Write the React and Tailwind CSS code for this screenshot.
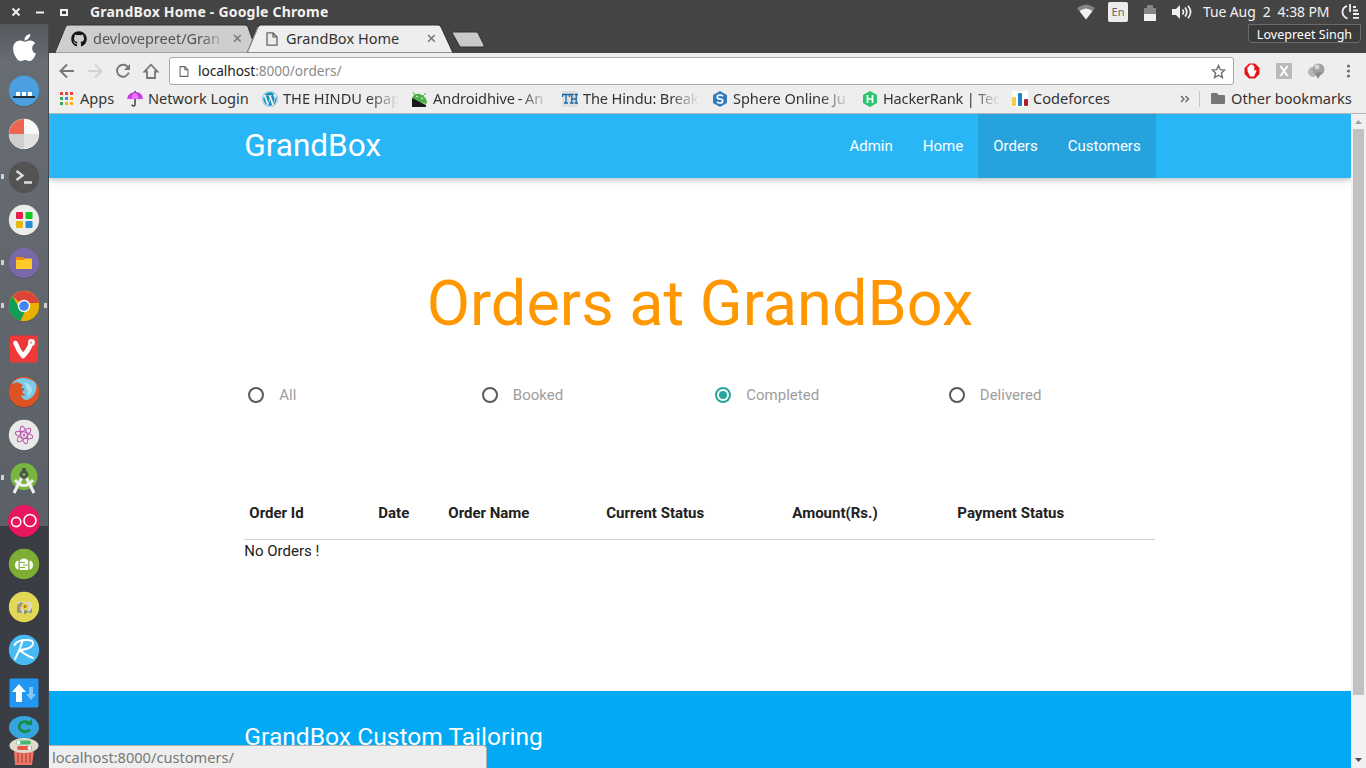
import React from "react";
import { FaApple, FaGithub, FaWordpress } from "react-icons/fa";

const BAR = "font-['Noto_Sans','Open_Sans',sans-serif]";

function PageIcon({ className }) {
  return (
    <svg className={className} viewBox="0 0 12 14" fill="none" stroke="#666" strokeWidth="1.3">
      <path d="M1 .8h6l4 4v8.4H1zM7 .8v4h4" />
    </svg>
  );
}

function CloseIcon({ className }) {
  return (
    <svg className={className} viewBox="0 0 10 10" fill="none" stroke="#777" strokeWidth="1.7">
      <path d="M1.2 1.2l7.4 7.4M8.6 1.2L1.2 8.6" />
    </svg>
  );
}

function TitleBar() {
  return (
    <header className={`flex h-[24px] shrink-0 items-center bg-[#444444] text-[14px] text-[#f2f1ef] ${BAR}`}>
      <svg className="h-[24px] w-[80px] shrink-0" viewBox="0 0 80 24" fill="none" stroke="#f2f1ef" strokeWidth="2">
        <path d="M12.500 8.500l7 7M19.500 8.500l-7 7M36 12.500h8" />
        <path d="M61 10h6v5h-6z" />
      </svg>
      <span className="mb-[2px] ml-[10px] whitespace-nowrap text-[14px] font-bold tracking-[0.2px]">GrandBox Home - Google Chrome</span>
      <div className="ml-auto flex h-full items-center">
        <svg className="h-[16px] w-[20px]" viewBox="0 0 20 16">
          <path d="M1 4Q10-3 19 4L10 15.500z" fill="#858585" />
          <path d="M3.500 7Q10 2 16.500 7L10 15.500z" fill="#f0f0f0" />
        </svg>
        <span className="ml-[12px] flex h-[20px] w-[20px] items-center justify-center rounded-[2px] bg-[#ededed] text-[11px] text-[#666]">En</span>
        <svg className="ml-[15px] h-[17px] w-[14px]" viewBox="0 0 14 17">
          <path d="M4 1h6v3h3v6H1V4h3z" fill="#858585" />
          <path d="M1 10h12v7H1z" fill="#f0f0f0" />
        </svg>
        <svg className="ml-[14px] h-[16px] w-[22px]" viewBox="0 0 22 16" fill="none" stroke="#f0f0f0" strokeWidth="1.700">
          <path d="M1 5h4l4-4v14l-4-4H1z" fill="#f0f0f0" stroke="none" />
          <path d="M11.500 5.500q2 2.500 0 5M14 3.500q3.600 4.500 0 9M17 1.700q5.200 6.300 0 12.600" />
        </svg>
        <span className="mb-[2px] ml-[10px] w-[127px] whitespace-pre text-[14px] tracking-[-0.12px]">Tue Aug  2  4:38 PM</span>
        <svg className="ml-[11px] mr-[6px] h-[16px] w-[19px]" viewBox="0 0 19 16" fill="none" stroke="#f0f0f0" strokeWidth="1.800">
          <path d="M6 1.800Q1.500 3.500 1.500 8T6.500 14.600M9 0v8" />
          <path d="M12 3h3M12 6.500h5M12 10h6M12 13.800h6" />
        </svg>
      </div>
    </header>
  );
}

function Launcher() {
  const icons = [
    <FaApple key="a" className="h-[31px] w-[31px] text-white" />,
    <Disc key="b" fill="#4ca0df">
      <path d="M5 21h22v2H5z" fill="#252d35" />
      <path d="M8 17h4v4H8zM14 17h4v4h-4zM20 17h4v4h-4z" fill="#fff" />
    </Disc>,
    <Disc key="c" fill="#f8f8f8">
      <path d="M16 16V1A15 15 0 0 0 1 16z" fill="#ef6650" />
      <path d="M16 16v15A15 15 0 0 1 1 16z" fill="#cfcfcf" />
      <path d="M16 16v15A15 15 0 0 0 31 16z" fill="#e2e2e2" />
    </Disc>,
    <Disc key="d" fill="#535353">
      <path d="M8.500 10l6 4.500-6 4.500M16 21.500h8" fill="none" stroke="#dcdcdc" strokeWidth="2.400" />
    </Disc>,
    <Disc key="e" fill="#ececec">
      <rect x="8" y="8" width="7" height="7" rx="1" fill="#e91e4d" />
      <rect x="17.500" y="8" width="7" height="7" rx="1" fill="#0bc91c" />
      <rect x="8" y="17" width="7" height="7" rx="1" fill="#e7b70a" />
      <rect x="17.500" y="17" width="7" height="7" rx="1" fill="#288bd5" />
    </Disc>,
    <Disc key="f" fill="#7868a8">
      <path d="M8 10h7l1 2h8v10H8z" fill="#f58a12" />
      <path d="M8 13h7l2-1.500h7V22H8z" fill="#ffca28" />
    </Disc>,
    <Disc key="g" fill="#e8b000">
      <path d="M16 16L4.500 6.200A15.200 15.200 0 0 1 30.800 13H16z" fill="#db4437" />
      <path d="M4.500 6.200L10.500 17l7 3-5 10.800A15.200 15.200 0 0 1 4.500 6.200z" fill="#0f9d58" />
      <circle cx="16" cy="16" r="6.200" fill="#fff" />
      <circle cx="16" cy="16" r="4.800" fill="#4285f4" />
    </Disc>,
    <svg key="h" className="h-[32px] w-[32px]" viewBox="0 0 32 32">
      <rect x="2" y="2.500" width="28" height="27" rx="2" fill="#ef3939" />
      <path d="M7.500 10Q10 17 15 23q6-6 8.500-14" fill="none" stroke="#fff" strokeWidth="4.600" strokeLinecap="round" strokeLinejoin="round" />
      <circle cx="23.500" cy="9.500" r="3.400" fill="#fff" />
      <circle cx="23" cy="9.500" r="1.300" fill="#f3a0a0" />
    </svg>,
    <Disc key="i" fill="#dd5324">
      <path d="M5 6Q15-2 27 6q3 5 0 11-2 5-8 7-5 0-6-5l5 1-4-4 2-2-3-2 2-3-6-3-5 2z" fill="#79cae8" />
      <path d="M15 6q8 1 9 8-1 5-5 6 3-5-1-8 1-3-3-6" fill="#a8e0f2" />
      <path d="M14 12l3 1-2 1z" fill="#27688a" />
    </Disc>,
    <Disc key="j" fill="#e9e9e9">
      <g fill="none" stroke="#b950ab" strokeWidth="1">
        <ellipse cx="16" cy="16" rx="9" ry="3.200" transform="rotate(15 16 16)" />
        <ellipse cx="16" cy="16" rx="9" ry="3.200" transform="rotate(75 16 16)" />
        <ellipse cx="16" cy="16" rx="9" ry="3.200" transform="rotate(135 16 16)" />
      </g>
      <circle cx="16" cy="16" r="1.200" fill="#b950ab" />
    </Disc>,
    <svg key="k" className="h-[34px] w-[32px]" viewBox="0 0 32 34">
      <circle cx="16" cy="15.500" r="13.500" fill="#78b63f" />
      <path d="M14.500 15L6 32M17.500 15L26 32" stroke="#f0f0f0" strokeWidth="3" />
      <path d="M7 19q9 11 18 0" fill="none" stroke="#f0f0f0" strokeWidth="2.800" />
      <path d="M16 7v5" stroke="#4b5550" strokeWidth="3.500" />
      <circle cx="16" cy="13.500" r="3" fill="#78b63f" stroke="#4b5550" strokeWidth="2.800" />
    </svg>,
    <Disc key="l" fill="#e7175f" big>
      <g fill="none" stroke="#fff" strokeWidth="1.600">
        <circle cx="8.200" cy="17" r="4.600" />
        <circle cx="22" cy="15.500" r="6" />
      </g>
    </Disc>,
    <Disc key="m" fill="#7fae35">
      <path d="M10.500 12.500Q7 13 7 17t3.500 4.500zM21.500 12.500Q25 13 25 17t-3.500 4.500z" fill="#fff" />
      <path d="M11.800 14q0-3.500 4.200-3.500t4.200 3.500v8h-8.400z" fill="#fff" />
      <path d="M12 14.500h5M15 17h5M12 19.500h5" stroke="#7fae35" />
    </Disc>,
    <Disc key="n" fill="#e0d755">
      <path d="M9 11h15v11H9z" fill="#d8d8d0" />
      <path d="M9 14l4-3 3 2-4 4 2 5H9zM20 22h4v-5z" fill="#97958d" />
      <circle cx="17" cy="15.500" r="3.600" fill="#e9d740" />
      <circle cx="17" cy="15.500" r="1.500" fill="#b86c27" />
      <path d="M17 19v3l3-2" fill="none" stroke="#729839" strokeWidth="1.600" />
    </Disc>,
    <Disc key="o" fill="#49b9f4">
      <path d="M6.500 11Q9 6 19 6q7 0 6 4-1.500 5-13 6 5 5 13 8M14.500 7Q12 16 7 25" fill="none" stroke="#fff" strokeWidth="2" strokeLinecap="round" strokeLinejoin="round" />
    </Disc>,
    <svg key="p" className="h-[32px] w-[32px]" viewBox="0 0 32 32">
      <rect x="1.500" y="1.500" width="29" height="29" rx="1.500" fill="#2196f3" />
      <path d="M11 7l7 8h-4v10H8V15H4z" fill="#fff" />
      <path d="M23 23l-5-6h3v-7h4v7h3z" fill="#83c6fa" />
    </svg>,
  ];
  return (
    <aside className="relative flex w-[49px] shrink-0 flex-col items-stretch border-r border-r-[#45484c] bg-linear-to-b from-[#55585d] via-[#686c73] via-5% to-[#555a61] pt-[2px]">
      <div className="absolute inset-x-0 bottom-0 top-[502px] bg-[#3a3d44]" />
      {icons.map((icon, i) => (
        <div key={i} className="relative flex h-[43px] shrink-0 items-center justify-center">
          {(i === 3 || i === 5 || i === 6 || i === 10) && <i className="absolute left-[1px] top-[19px] h-[5px] w-[3px] bg-[#d0d1d3]" />}
          {i === 6 && <i className="absolute right-[1px] top-[19px] h-[5px] w-[3px] bg-[#d0d1d3]" />}
          {icon}
        </div>
      ))}
      <svg className="relative h-[54px] w-[48px] shrink-0" viewBox="0 0 48 54">
        <ellipse cx="24" cy="13.500" rx="15" ry="11.500" fill="#37a5dd" />
        <path d="M28.500 8.500a6 5 0 1 0 1.500 7" fill="none" stroke="#168c43" strokeWidth="2.700" />
        <path d="M25 11h7V5z" fill="#168c43" />
        <path d="M14 36h20l-2 15H15z" fill="#ef7765" />
        <path d="M18 39v10M22 39v10M26 39v10M30 39v10" stroke="#b54b41" strokeWidth="1.300" />
        <ellipse cx="24" cy="31.500" rx="14.500" ry="7.500" fill="#deddcd" />
        <rect x="16" y="26.500" width="15" height="4" rx="2" fill="#48b96f" />
        <rect x="17" y="32" width="15" height="4" rx="2" fill="#eb554e" />
        <circle cx="18.500" cy="28.500" r="1.900" fill="#fff" />
        <circle cx="29.500" cy="34" r="1.900" fill="#fff" />
      </svg>
    </aside>
  );
}

function Disc({ fill, big, children }) {
  return (
    <svg className="h-[32px] w-[32px] overflow-visible" viewBox="0 0 32 32">
      <circle cx="16" cy="16.800" r={big ? 16 : 15.2} fill="#000" opacity=".22" />
      <circle cx="16" cy="16" r={big ? 16 : 15.2} fill={fill} />
      {children}
    </svg>
  );
}

function TabStrip() {
  return (
    <div className={`flex h-[29px] shrink-0 bg-[#444444] text-[14.500px] ${BAR}`}>
      <div className="relative ml-[7px] flex h-[29px] w-[191px] items-center">
        <svg className="absolute inset-0 h-[29px] w-[201px]" viewBox="0 0 201 29">
          <path d="M-1 28.500L9.500 3Q10.500 1 12 1h177q2 0 3 2l9 25.500z" fill="#cecece" stroke="#303030" />
          <path d="M-1 28.500h200" stroke="#a0a0a0" />
        </svg>
        <FaGithub className="relative ml-[15px] h-[16px] w-[16px] text-[#171515]" />
        <span className="relative ml-[6px] w-[135px] whitespace-nowrap text-[#555] mask-r-from-80% mask-r-to-100%">devlovepreet/Gran</span>
        <CloseIcon className="relative ml-[5px] h-[9px] w-[9px]" />
      </div>
      <div className="relative flex h-[29px] w-[205px] items-center">
        <svg className="absolute inset-0 h-[29px] w-[207px]" viewBox="0 0 207 29">
          <path d="M0 29L11 3q1-2 3-2h177q2 0 3 2l12 26z" fill="#eeeeee" stroke="#303030" />
          <path d="M0 29L11 3" stroke="#999" />
        </svg>
        <PageIcon className="relative ml-[19px] h-[14px] w-[12px]" />
        <span className="relative ml-[8px] w-[141px] whitespace-nowrap tracking-[0.03px] text-[#333]">GrandBox Home</span>
        <CloseIcon className="relative h-[9px] w-[9px]" />
      </div>
      <svg className="h-[29px] w-[36px]" viewBox="0 0 36 29">
        <path d="M1 8h23q1.500 0 2 1l6 12q.5 2-1 2H9.500q-1.500 0-2-1L.5 9.500Q0 8 1 8z" fill="#c9c9c9" stroke="#303030" />
      </svg>
      <span className="ml-auto mr-[5px] flex h-[19px] w-[113px] items-center justify-center rounded-b-[4px] border border-[#6b6b6b] bg-[#3b3b3b] pl-[0px] pb-[0px] pt-[3px] text-[12.500px] tracking-[0.02px] text-white">Lovepreet Singh</span>
    </div>
  );
}

function Toolbar() {
  return (
    <div className={`flex h-[35px] shrink-0 items-center bg-[#eeeeee] text-[14px] ${BAR}`}>
      <svg className="h-[35px] w-[120px] shrink-0" viewBox="0 0 120 35" fill="none" stroke="#767676" strokeWidth="1.900">
        <path d="M25 18H12M18 11.500L11.500 18l6.500 6.500" />
        <path d="M39 18h13M46 11.500l6.500 6.500-6.500 6.500" stroke="#d2d2d2" />
        <path d="M79 14.300a6 6 0 1 0 .8 5.200" />
        <path d="M81 11v6h-6z" fill="#767676" stroke="none" />
        <path d="M95.500 18.500H98V25h8v-6.500h2.500l-6.500-6.800z" strokeWidth="1.800" />
      </svg>
      <div className="mt-[1px] flex h-[28px] w-[1065px] items-center rounded-[3px] border border-[#a9a9a9] bg-white">
        <PageIcon className="ml-[9px] h-[11px] w-[10px]" />
        <span className="ml-[9px] whitespace-nowrap text-[13.700px] tracking-[-0.07px] text-[#222]">localhost<span className="text-[#8b8b8b]">:8000/orders/</span></span>
        <svg className="ml-auto mr-[7px] h-[15px] w-[15px]" viewBox="0 0 15 15" fill="none" stroke="#6e6e6e" strokeWidth="1.400">
          <path d="M7.500 1.500l1.800 4.200 4.500.3-3.400 3 1 4.600-3.900-2.400-3.900 2.400 1-4.600-3.400-3 4.500-.3z" />
        </svg>
      </div>
      <svg className="h-[35px] w-[132px] shrink-0" viewBox="0 0 132 35">
        <path d="M15 10.500h6l4.500 4.500v6L21 25.500h-6L10.500 21v-6z" fill="#e5141b" />
        <path d="M13.500 18v-4q1.400-1 1.700 0v-1.700q1-1 1.700 0v-.8q1-.8 1.700.3v1q1-.8 1.700.3V18l1.200-1q1.500 0 .8 1.300L20 23.500h-4z" fill="#fff" />
        <rect x="42" y="10" width="16" height="16" rx="1" fill="#b9b9b9" />
        <path d="M46.500 13l7 10M53.500 13l-7 10" stroke="#fff" strokeWidth="2" />
        <circle cx="79" cy="19" r="5" fill="#b5b5b5" />
        <circle cx="84.500" cy="16.500" r="6" fill="#a1a1a1" />
        <circle cx="83" cy="14" r="2.500" fill="#d5d5d5" />
        <path d="M81 20l3 6 4-7z" fill="#888" />
        <circle cx="114.500" cy="13" r="1.600" fill="#6e6e6e" />
        <circle cx="114.500" cy="18" r="1.600" fill="#6e6e6e" />
        <circle cx="114.500" cy="23" r="1.600" fill="#6e6e6e" />
      </svg>
    </div>
  );
}

const bookmarks = [
  { label: "Apps", slot: "w-[68px]", text: "", icon: <svg className="h-[14px] w-[15px]" viewBox="-1 0 15 14"><path d="M0 0h3v3H0zM5 0h3v3H5zM10 0h3v3h-3z" fill="#e84335" /><path d="M0 5h3v3H0z" fill="#34a853" /><path d="M5 5h3v3H5z" fill="#4285f4" /><path d="M10 5h3v3h-3z" fill="#fbb00c" /><path d="M0 10h3v3H0z" fill="#34a853" /><path d="M5 10h3v3H5zM10 10h3v3h-3z" fill="#fbb00c" /></svg> },
  { label: "Network Login", slot: "w-[135px]", text: "", icon: <svg className="h-[16px] w-[16px]" viewBox="0 0 16 16"><path d="M0 8.500Q.5 1.500 8 1t8 7.500q-2-1.500-4 0-2-1.500-4 0-2-1.500-4 0-2-1.500-4 0z" fill="#c539e8" /><path d="M4 8Q5 3 8 1.500 11 3 12 8q-2-1-4 0-2-1-4 0z" fill="#e678fa" /><path d="M8 0v1.500M8 8v5.500q0 1.500-1.500 1.500T5 13.500" fill="none" stroke="#493858" strokeWidth="1.500" /></svg> },
  { label: "THE HINDU epap", slot: "w-[150px]", text: "w-[116px] mask-r-from-75% mask-r-to-100%", icon: <FaWordpress className="h-[16px] w-[16px] text-[#168fc0]" /> },
  { label: "Androidhive - An", slot: "w-[150px]", text: "w-[116px] mask-r-from-75% mask-r-to-100% tracking-[-0.1px] [word-spacing:-1px]", icon: <svg className="h-[16px] w-[16px]" viewBox="0 0 16 16"><path d="M1 5q4-4 9-1t5 8l-1 1L0 8z" fill="#4eaf43" /><path d="M0 7l14 7v2H0z" fill="#171b15" /><path d="M3 4L1 1M11 5l3-3" stroke="#4eaf43" /><circle cx="5" cy="5.500" r=".8" fill="#fff" /><circle cx="10" cy="7.500" r=".8" fill="#fff" /></svg> },
  { label: "The Hindu: Break", slot: "w-[150px]", text: "w-[116px] mask-r-from-75% mask-r-to-100% tracking-[-0.15px]", icon: <svg className="h-[16px] w-[16px]" viewBox="0 0 16 16"><path d="M0 0h16v16H0z" fill="#dedede" /><path d="M0 3.500h8M4 3.500v9M2 12h4M.5 3v3M7.500 3v3M8 3.500h3.500M12.500 3.500H16M9.800 3.500v9M14.200 3.500v9M9.800 8h4.400M8 12h3.500M12.500 12H16" fill="none" stroke="#1667a5" strokeWidth="1.300" /></svg> },
  { label: "Sphere Online Ju", slot: "w-[150px]", text: "w-[117px] mask-r-from-75% mask-r-to-100% tracking-[-0.08px]", icon: <svg className="h-[16px] w-[16px]" viewBox="0 0 16 16"><path d="M8 0l7 4v8l-7 4-7-4V4z" fill="#327bbd" /><path d="M11 5.200Q9.500 4 8 4 5.300 4 5.300 6T8 8t2.700 2T8 12q-2 0-3-1.200" fill="none" stroke="#fff" strokeWidth="1.700" /></svg> },
  { label: "HackerRank | Tec", slot: "w-[150px]", text: "w-[117px] mask-r-from-75% mask-r-to-100% tracking-[-0.2px]", icon: <svg className="h-[16px] w-[16px]" viewBox="0 0 16 16"><path d="M8 0l7 4v8l-7 4-7-4V4z" fill="#2ac56c" /><path d="M5.500 4v8M10.500 4v8M5.500 8h5" fill="none" stroke="#fff" strokeWidth="1.700" /></svg> },
  { label: "Codeforces", slot: "w-[110px]", text: "", icon: <svg className="h-[16px] w-[16px]" viewBox="0 0 16 16"><path d="M0 0h16v16H0z" fill="#fff" /><rect y="6" width="4" height="9" rx="1" fill="#f9c94a" /><rect x="6" y="2" width="4" height="13" rx="1" fill="#1b87cb" /><rect x="12" y="8" width="4" height="7" rx="1" fill="#b21f29" /></svg> },
];

function BookmarksBar() {
  return (
    <div className={`flex h-[26px] shrink-0 items-center border-b border-[#b3b3b3] bg-[#eeeeee] pb-[4px] pl-[10px] text-[14.600px] text-[#333] ${BAR}`}>
      {bookmarks.map((b) => (
        <div key={b.label} className={`flex shrink-0 items-center ${b.slot}`}>
          <span className="flex w-[21px] shrink-0">{b.icon}</span>
          <span className={`whitespace-nowrap ${b.text}`}>{b.label}</span>
        </div>
      ))}
      <svg className="ml-auto h-[16px] w-[10px]" viewBox="0 0 10 16" fill="none" stroke="#666" strokeWidth="1.400"><path d="M1 5l3 3-3 3M5.500 5l3 3-3 3" /></svg>
      <i className="ml-[9px] h-[16px] w-px bg-[#c7c7c7]" />
      <svg className="ml-[11px] h-[13px] w-[14px]" viewBox="0 0 14 13"><path d="M1 1h5l1.500 2H13q1 0 1 1v7q0 1-1 1H1q-1 0-1-1V2q0-1 1-1z" fill="#777" /></svg>
      <span className="ml-[6px] mr-[14px] w-[121px] whitespace-nowrap">Other bookmarks</span>
    </div>
  );
}

const options = ["All", "Booked", "Completed", "Delivered"];

function Page() {
  return (
    <main className="relative flex min-w-0 flex-1 flex-col overflow-hidden bg-white font-[Roboto,sans-serif] text-[15px] text-[#212121]">
      <nav className="relative flex h-[64px] shrink-0 justify-between bg-[#29b6f6] px-[195.300px] text-white shadow-[0_2px_5px_0_rgba(0,0,0,0.16),0_2px_10px_0_rgba(0,0,0,0.12)]">
        <span className="text-[31.500px] leading-[64px]">GrandBox</span>
        <div className="flex leading-[64px]">
          <a className="px-[15px]">Admin</a>
          <a className="px-[15px]">Home</a>
          <a className="bg-[#26a3dd] px-[15px]">Orders</a>
          <a className="bg-[#26a3dd] px-[15px]">Customers</a>
        </div>
      </nav>
      <section className="flex flex-1 flex-col px-[195.300px]">
        <h1 className="mt-[91px] text-center text-[63px] leading-[70px] text-[#ff9800]">Orders at GrandBox</h1>
        <div className="mt-[43px] grid w-[934px] grid-cols-4">
          {options.map((name) => (
            <label key={name} className="flex h-[25px] items-center pl-[4px] text-[#9e9e9e]">
              <span className={`flex h-[16px] w-[16px] items-center justify-center rounded-full border-2 ${name === "Completed" ? "border-[#26a69a]" : "border-[#5a5a5a]"}`}>
                {name === "Completed" && <i className="h-[8px] w-[8px] rounded-full bg-[#26a69a]" />}
              </span>
              <span className="ml-[15px] pt-[1px] leading-[24px]">{name}</span>
            </label>
          ))}
        </div>
        <div className="mr-[1px] mt-[79px] flex h-[54px] border-b border-[#d0d0d0] pl-[5px] pt-[16px] font-bold leading-[23px]">
          <span className="w-[129px]">Order Id</span>
          <span className="w-[70px]">Date</span>
          <span className="w-[158px]">Order Name</span>
          <span className="w-[186px]">Current Status</span>
          <span className="w-[165px]">Amount(Rs.)</span>
          <span>Payment Status</span>
        </div>
        <p className="leading-[22px]">No Orders !</p>
      </section>
      <footer className="h-[77px] shrink-0 bg-[#03a9f4] px-[195.300px] pt-[32px] text-[24.600px] leading-[27px] text-white">GrandBox Custom Tailoring</footer>
      <div className={`absolute bottom-0 left-0 h-[23px] w-[438px] rounded-tr-[4px] border-r border-t border-[#b0b0b0] bg-[#eeeeee] pl-[3px] text-[14.600px] leading-[22px] text-[#777] ${BAR}`}>localhost:8000/customers/</div>
    </main>
  );
}

function Scrollbar() {
  return (
    <div className="flex w-[15px] shrink-0 flex-col items-center bg-[#f1f1f1]">
      <svg className="h-[15px] w-[15px]" viewBox="0 0 15 15"><path d="M4 10h7L7.500 6z" fill="#a3a3a3" /></svg>
      <div className="h-[566px] w-[11px] bg-[#c1c1c1]" />
      <svg className="mt-auto h-[15px] w-[15px]" viewBox="0 0 15 15"><path d="M4 5h7L7.500 9z" fill="#505050" /></svg>
    </div>
  );
}

export default function App() {
  return (
    <div className="flex h-[768px] w-[1366px] flex-col overflow-hidden">
      <TitleBar />
      <div className="flex min-h-0 flex-1">
        <Launcher />
        <div className="flex min-w-0 flex-1 flex-col">
          <TabStrip />
          <Toolbar />
          <BookmarksBar />
          <div className="flex min-h-0 flex-1">
            <Page />
            <Scrollbar />
          </div>
        </div>
      </div>
    </div>
  );
}
